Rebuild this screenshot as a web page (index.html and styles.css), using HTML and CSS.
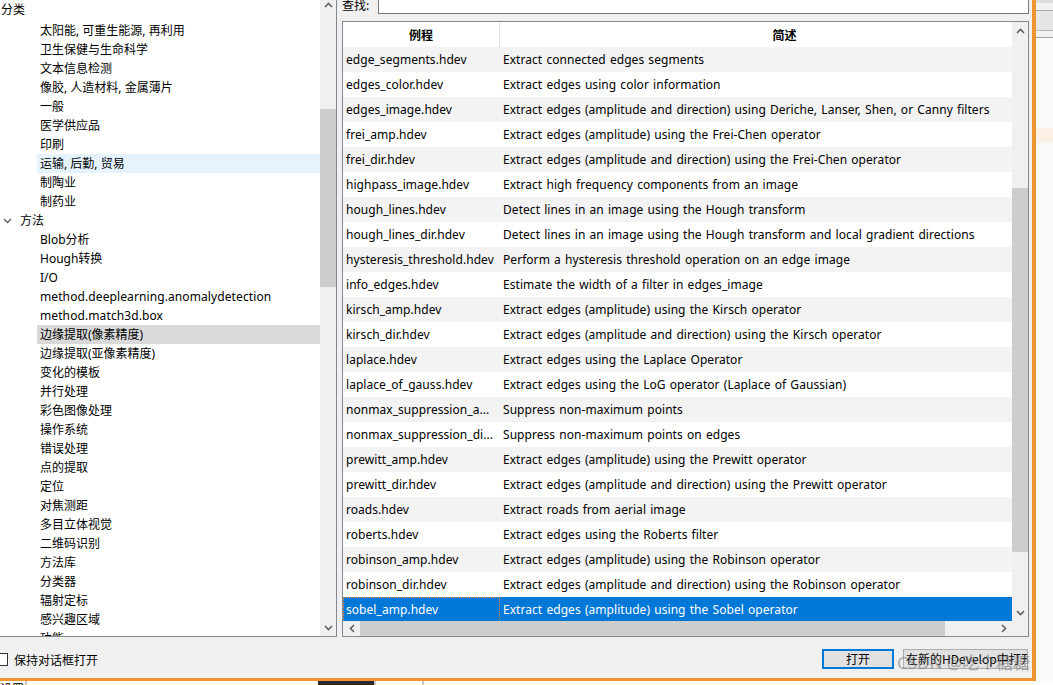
FILE: index.html
```html
<!DOCTYPE html>
<html lang="zh-CN">
<head>
<meta charset="utf-8">
<title>HDevelop 例程</title>
<link rel="stylesheet" href="styles.css">
</head>
<body>
<div class="screen">
  <div class="dialog">
    <div class="main">
      <div class="tree-panel">
        <div class="tree">
          <div class="node root">分类</div>
          <div class="node leaf">太阳能, 可重生能源, 再利用</div>
          <div class="node leaf">卫生保健与生命科学</div>
          <div class="node leaf">文本信息检测</div>
          <div class="node leaf">像胶, 人造材料, 金属薄片</div>
          <div class="node leaf">一般</div>
          <div class="node leaf">医学供应品</div>
          <div class="node leaf">印刷</div>
          <div class="node leaf hover">运输, 后勤, 贸易</div>
          <div class="node leaf">制陶业</div>
          <div class="node leaf">制药业</div>
          <div class="node branch"><svg class="chev" width="9" height="6" viewBox="0 0 9 6"><polyline points="1,1 4.5,4.5 8,1" fill="none" stroke="#606060" stroke-width="1.4"/></svg><span>方法</span></div>
          <div class="node leaf">Blob分析</div>
          <div class="node leaf">Hough转换</div>
          <div class="node leaf">I/O</div>
          <div class="node leaf latin">method.deeplearning.anomalydetection</div>
          <div class="node leaf latin">method.match3d.box</div>
          <div class="node leaf selected">边缘提取(像素精度)</div>
          <div class="node leaf">边缘提取(亚像素精度)</div>
          <div class="node leaf">变化的模板</div>
          <div class="node leaf">并行处理</div>
          <div class="node leaf">彩色图像处理</div>
          <div class="node leaf">操作系统</div>
          <div class="node leaf">错误处理</div>
          <div class="node leaf">点的提取</div>
          <div class="node leaf">定位</div>
          <div class="node leaf">对焦测距</div>
          <div class="node leaf">多目立体视觉</div>
          <div class="node leaf">二维码识别</div>
          <div class="node leaf">方法库</div>
          <div class="node leaf">分类器</div>
          <div class="node leaf">辐射定标</div>
          <div class="node leaf">感兴趣区域</div>
          <div class="node leaf">功能</div>
        </div>
        <div class="vscroll">
          <div class="sb-btn"><svg width="9" height="6" viewBox="0 0 9 6"><polyline points="1,5 4.5,1.5 8,5" fill="none" stroke="#606060" stroke-width="1.6"/></svg></div>
          <div class="sb-track"><div class="sb-thumb tree-thumb"></div></div>
          <div class="sb-btn"><svg width="9" height="6" viewBox="0 0 9 6"><polyline points="1,1 4.5,4.5 8,1" fill="none" stroke="#606060" stroke-width="1.6"/></svg></div>
        </div>
      </div>
      <div class="right">
        <div class="search">
          <span class="search-label">查找:</span>
          <div class="search-input"></div>
        </div>
        <div class="table-panel">
          <div class="tv">
            <div class="clip">
              <div class="table">
                <div class="thead">
                  <div class="th">例程</div>
                  <div class="th">简述</div>
                </div>
                <div class="tbody">
                  <div class="tr"><div class="td">edge_segments.hdev</div><div class="td">Extract connected edges segments</div></div>
                  <div class="tr"><div class="td">edges_color.hdev</div><div class="td">Extract edges using color information</div></div>
                  <div class="tr"><div class="td">edges_image.hdev</div><div class="td">Extract edges (amplitude and direction) using Deriche, Lanser, Shen, or Canny filters</div></div>
                  <div class="tr"><div class="td">frei_amp.hdev</div><div class="td">Extract edges (amplitude) using the Frei-Chen operator</div></div>
                  <div class="tr"><div class="td">frei_dir.hdev</div><div class="td">Extract edges (amplitude and direction) using the Frei-Chen operator</div></div>
                  <div class="tr"><div class="td">highpass_image.hdev</div><div class="td">Extract high frequency components from an image</div></div>
                  <div class="tr"><div class="td">hough_lines.hdev</div><div class="td">Detect lines in an image using the Hough transform</div></div>
                  <div class="tr"><div class="td">hough_lines_dir.hdev</div><div class="td">Detect lines in an image using the Hough transform and local gradient directions</div></div>
                  <div class="tr"><div class="td">hysteresis_threshold.hdev</div><div class="td">Perform a hysteresis threshold operation on an edge image</div></div>
                  <div class="tr"><div class="td">info_edges.hdev</div><div class="td">Estimate the width of a filter in edges_image</div></div>
                  <div class="tr"><div class="td">kirsch_amp.hdev</div><div class="td">Extract edges (amplitude) using the Kirsch operator</div></div>
                  <div class="tr"><div class="td">kirsch_dir.hdev</div><div class="td">Extract edges (amplitude and direction) using the Kirsch operator</div></div>
                  <div class="tr"><div class="td">laplace.hdev</div><div class="td">Extract edges using the Laplace Operator</div></div>
                  <div class="tr"><div class="td">laplace_of_gauss.hdev</div><div class="td">Extract edges using the LoG operator (Laplace of Gaussian)</div></div>
                  <div class="tr"><div class="td">nonmax_suppression_a...</div><div class="td">Suppress non-maximum points</div></div>
                  <div class="tr"><div class="td">nonmax_suppression_di...</div><div class="td">Suppress non-maximum points on edges</div></div>
                  <div class="tr"><div class="td">prewitt_amp.hdev</div><div class="td">Extract edges (amplitude) using the Prewitt operator</div></div>
                  <div class="tr"><div class="td">prewitt_dir.hdev</div><div class="td">Extract edges (amplitude and direction) using the Prewitt operator</div></div>
                  <div class="tr"><div class="td">roads.hdev</div><div class="td">Extract roads from aerial image</div></div>
                  <div class="tr"><div class="td">roberts.hdev</div><div class="td">Extract edges using the Roberts filter</div></div>
                  <div class="tr"><div class="td">robinson_amp.hdev</div><div class="td">Extract edges (amplitude) using the Robinson operator</div></div>
                  <div class="tr"><div class="td">robinson_dir.hdev</div><div class="td">Extract edges (amplitude and direction) using the Robinson operator</div></div>
                  <div class="tr sel"><div class="td focus">sobel_amp.hdev</div><div class="td">Extract edges (amplitude) using the Sobel operator</div></div>
                </div>
              </div>
            </div>
            <div class="vscroll">
              <div class="sb-btn"><svg width="9" height="6" viewBox="0 0 9 6"><polyline points="1,5 4.5,1.5 8,5" fill="none" stroke="#606060" stroke-width="1.6"/></svg></div>
              <div class="sb-track"><div class="sb-thumb table-thumb"></div></div>
              <div class="sb-btn"><svg width="9" height="6" viewBox="0 0 9 6"><polyline points="1,1 4.5,4.5 8,1" fill="none" stroke="#606060" stroke-width="1.6"/></svg></div>
            </div>
          </div>
          <div class="hbar">
            <div class="hscroll">
              <div class="hs-btn"><svg width="6" height="9" viewBox="0 0 6 9"><polyline points="5,1 1.5,4.5 5,8" fill="none" stroke="#606060" stroke-width="1.6"/></svg></div>
              <div class="hs-track"><div class="hs-thumb"></div></div>
              <div class="hs-btn"><svg width="6" height="9" viewBox="0 0 6 9"><polyline points="1,1 4.5,4.5 1,8" fill="none" stroke="#606060" stroke-width="1.6"/></svg></div>
            </div>
            <div class="corner"></div>
          </div>
        </div>
      </div>
    </div>
    <div class="footer">
      <label class="check"><span class="box"></span><span class="check-text">保持对话框打开</span></label>
      <div class="buttons">
        <div class="btn primary">打开</div>
        <div class="btn wide">在新的HDevelop中打开</div>
      </div>
    </div>
  </div>
  <div class="side">
    <div class="band b1"></div>
    <div class="band b2"></div>
    <div class="band b3"></div>
    <div class="band b4"></div>
    <div class="band b5"></div>
    <div class="band b6"></div>
    <div class="band b7"></div>
    <div class="band b8"></div>
    <div class="band b9"></div>
  </div>
  <div class="taskbar">
    <div class="tb-text">设置</div>
    <div class="tb-sep"></div>
    <div class="tb-fill"></div>
    <div class="tb-dark"></div>
    <div class="tb-sep"></div>
    <div class="tb-white"></div>
    <div class="tb-sep"></div>
  </div>
  <div class="watermark">CSDN @吃个糖糖</div>
</div>
</body>
</html>
```

FILE: styles.css
```css
* { box-sizing: border-box; }

body {
  margin: 0;
  background: #f0f0f0;
  font-family: "Noto Sans", "Noto Sans CJK SC", sans-serif;
  font-size: 12px;
  color: #000;
  overflow: hidden;
}

.screen {
  position: relative;
  display: grid;
  grid-template-columns: 1036px 17px;
  grid-template-rows: 681px 4px;
  width: 1053px;
  height: 685px;
  overflow: hidden;
}

.dialog {
  grid-column: 1;
  grid-row: 1;
  background: #f0f0f0;
  border-right: 4px solid #ee9430;
  border-bottom: 3px solid #ee9430;
  display: flex;
  flex-direction: column;
  overflow: hidden;
}

.main {
  display: flex;
  gap: 5px;
  height: 641px;
  margin-top: -4px;
  flex: none;
}

/* ---------- tree ---------- */
.tree-panel {
  width: 337px;
  height: 641px;
  border-right: 1px solid #828790;
  border-bottom: 1px solid #828790;
  background: #fff;
  display: flex;
}

.tree {
  flex: 1;
  overflow: hidden;
  padding-top: 4px;
  font-family: "Noto Sans", "Noto Sans CJK SC", sans-serif;
}

.node {
  height: 19px;
  line-height: 19px;
  white-space: nowrap;
}

.node.root {
  height: 21px;
  padding-left: 1px;
}

.node.leaf {
  margin-left: 37px;
  padding-left: 3px;
}

.node.latin { letter-spacing: 0.1px; }

.node.branch {
  display: flex;
  align-items: center;
}

.node.branch .chev {
  margin-left: 3px;
  margin-right: 8px;
}

.node.hover { background: #e5f3ff; }
.node.selected { background: #d9d9d9; }

/* ---------- scrollbars ---------- */
.vscroll {
  width: 16px;
  flex: none;
  background: #f0f0f0;
  display: flex;
  flex-direction: column;
}

.sb-btn {
  height: 17px;
  flex: none;
  display: flex;
  align-items: center;
  justify-content: center;
}

.sb-track { flex: 1; }

.sb-thumb { background: #cdcdcd; }

.tree-thumb {
  margin-top: 96px;
  height: 178px;
}

.table-thumb {
  margin-top: 149px;
  height: 364px;
}

/* ---------- right side ---------- */
.right {
  width: 687px;
  display: flex;
  flex-direction: column;
}

.search {
  height: 18px;
  flex: none;
  display: flex;
  margin-bottom: 7px;
}

.search-label {
  width: 36px;
  line-height: 18px;
  font-family: "Noto Sans CJK SC", sans-serif;
}

.search-input {
  flex: 1;
  background: #fff;
  border: 1px solid #7a7a7a;
}

.table-panel {
  flex: 1;
  min-height: 0;
  border: 1px solid #828790;
  background: #fff;
  display: flex;
  flex-direction: column;
}

.tv {
  flex: 1;
  min-height: 0;
  display: flex;
}

.clip {
  flex: 1;
  overflow: hidden;
  background: #fff;
}

.table { width: 726px; }

.thead,
.tr {
  display: grid;
  grid-template-columns: 157px 569px;
  height: 25px;
  line-height: 25px;
}

.th {
  text-align: center;
  font-weight: bold;
  font-family: "Noto Sans CJK SC", sans-serif;
}

.th:first-child { border-right: 1px solid #e5e5e5; }

.td {
  padding-left: 3px;
  white-space: nowrap;
  overflow: hidden;
  letter-spacing: 0.05px;
  word-spacing: 1px;
}

.tbody .tr:nth-child(odd) { background: #f3f3f3; }

.tbody .tr.sel {
  background: #0078d7;
  color: #fff;
}

.td.focus {
  outline: 1px dotted #ff8c2a;
  outline-offset: -1px;
}

.hbar {
  height: 15px;
  flex: none;
  display: flex;
}

.hscroll {
  flex: 1;
  display: flex;
  background: #f0f0f0;
}

.hs-btn {
  width: 17px;
  flex: none;
  display: flex;
  align-items: center;
  justify-content: center;
}

.hs-track { flex: 1; }

.hs-thumb {
  width: 585px;
  height: 100%;
  background: #cdcdcd;
}

.corner {
  width: 16px;
  background: #f0f0f0;
}

/* ---------- footer ---------- */
.footer {
  flex: 1;
  display: flex;
  align-items: flex-start;
  padding-right: 4px;
  font-family: "Noto Sans CJK SC", sans-serif;
}

.check {
  display: flex;
  align-items: center;
  margin-top: 16px;
  height: 13px;
}

.box {
  width: 13px;
  height: 13px;
  margin-left: -5px;
  border: 1px solid #333;
  background: #fff;
}

.check-text {
  margin-left: 6px;
  line-height: 13px;
}

.buttons {
  margin-left: auto;
  margin-top: 12px;
  display: flex;
  gap: 9px;
}

.btn {
  height: 20px;
  background: #e1e1e1;
  border: 1px solid #adadad;
  line-height: 18px;
  white-space: nowrap;
  overflow: hidden;
}

.btn.primary {
  width: 72px;
  border: 2px solid #0078d7;
  line-height: 16px;
  text-align: center;
}

.btn.wide {
  width: 125px;
  padding-left: 2px;
}

/* ---------- neighbouring windows ---------- */
.side {
  grid-column: 2;
  grid-row: 1;
  background: #f9f9f9;
  display: flex;
  flex-direction: column;
}

.band { flex: none; }
.b1 { height: 3px; background: #dedede; }
.b2 { height: 7px; background: #f2f2f2; }
.b3 { height: 1px; background: #a9a9a9; }
.b4 { height: 19px; background: #e6e6e6; }
.b5 { height: 1px; background: #b4b4b4; }
.b6 { height: 6px; background: #f2f2f2; }
.b7 { height: 1px; background: #a0a0a0; }
.b8 { height: 90px; background: #fafafa; }
.b9 { height: 15px; background: #fdf1e6; }

.taskbar {
  grid-column: 1 / 3;
  grid-row: 2;
  background: #fff;
  display: flex;
  overflow: hidden;
  font-family: "Noto Sans CJK SC", sans-serif;
  font-size: 12px;
}

.tb-text {
  width: 25px;
  line-height: 12px;
  margin-top: 2px;
  background: #f0f0f0;
}

.tb-sep {
  width: 2px;
  background: #c8c8c8;
}

.tb-fill {
  width: 291px;
  background: #fff;
}

.tb-dark {
  width: 56px;
  background: #2b2b2b;
}

.tb-white {
  width: 46px;
  background: #fff;
}

.watermark {
  position: absolute;
  left: 897px;
  top: 652px;
  font-family: "Noto Sans", "Noto Sans CJK SC", sans-serif;
  font-size: 17px;
  line-height: 22px;
  color: rgba(110, 110, 110, 0.55);
  white-space: nowrap;
  pointer-events: none;
}
```
